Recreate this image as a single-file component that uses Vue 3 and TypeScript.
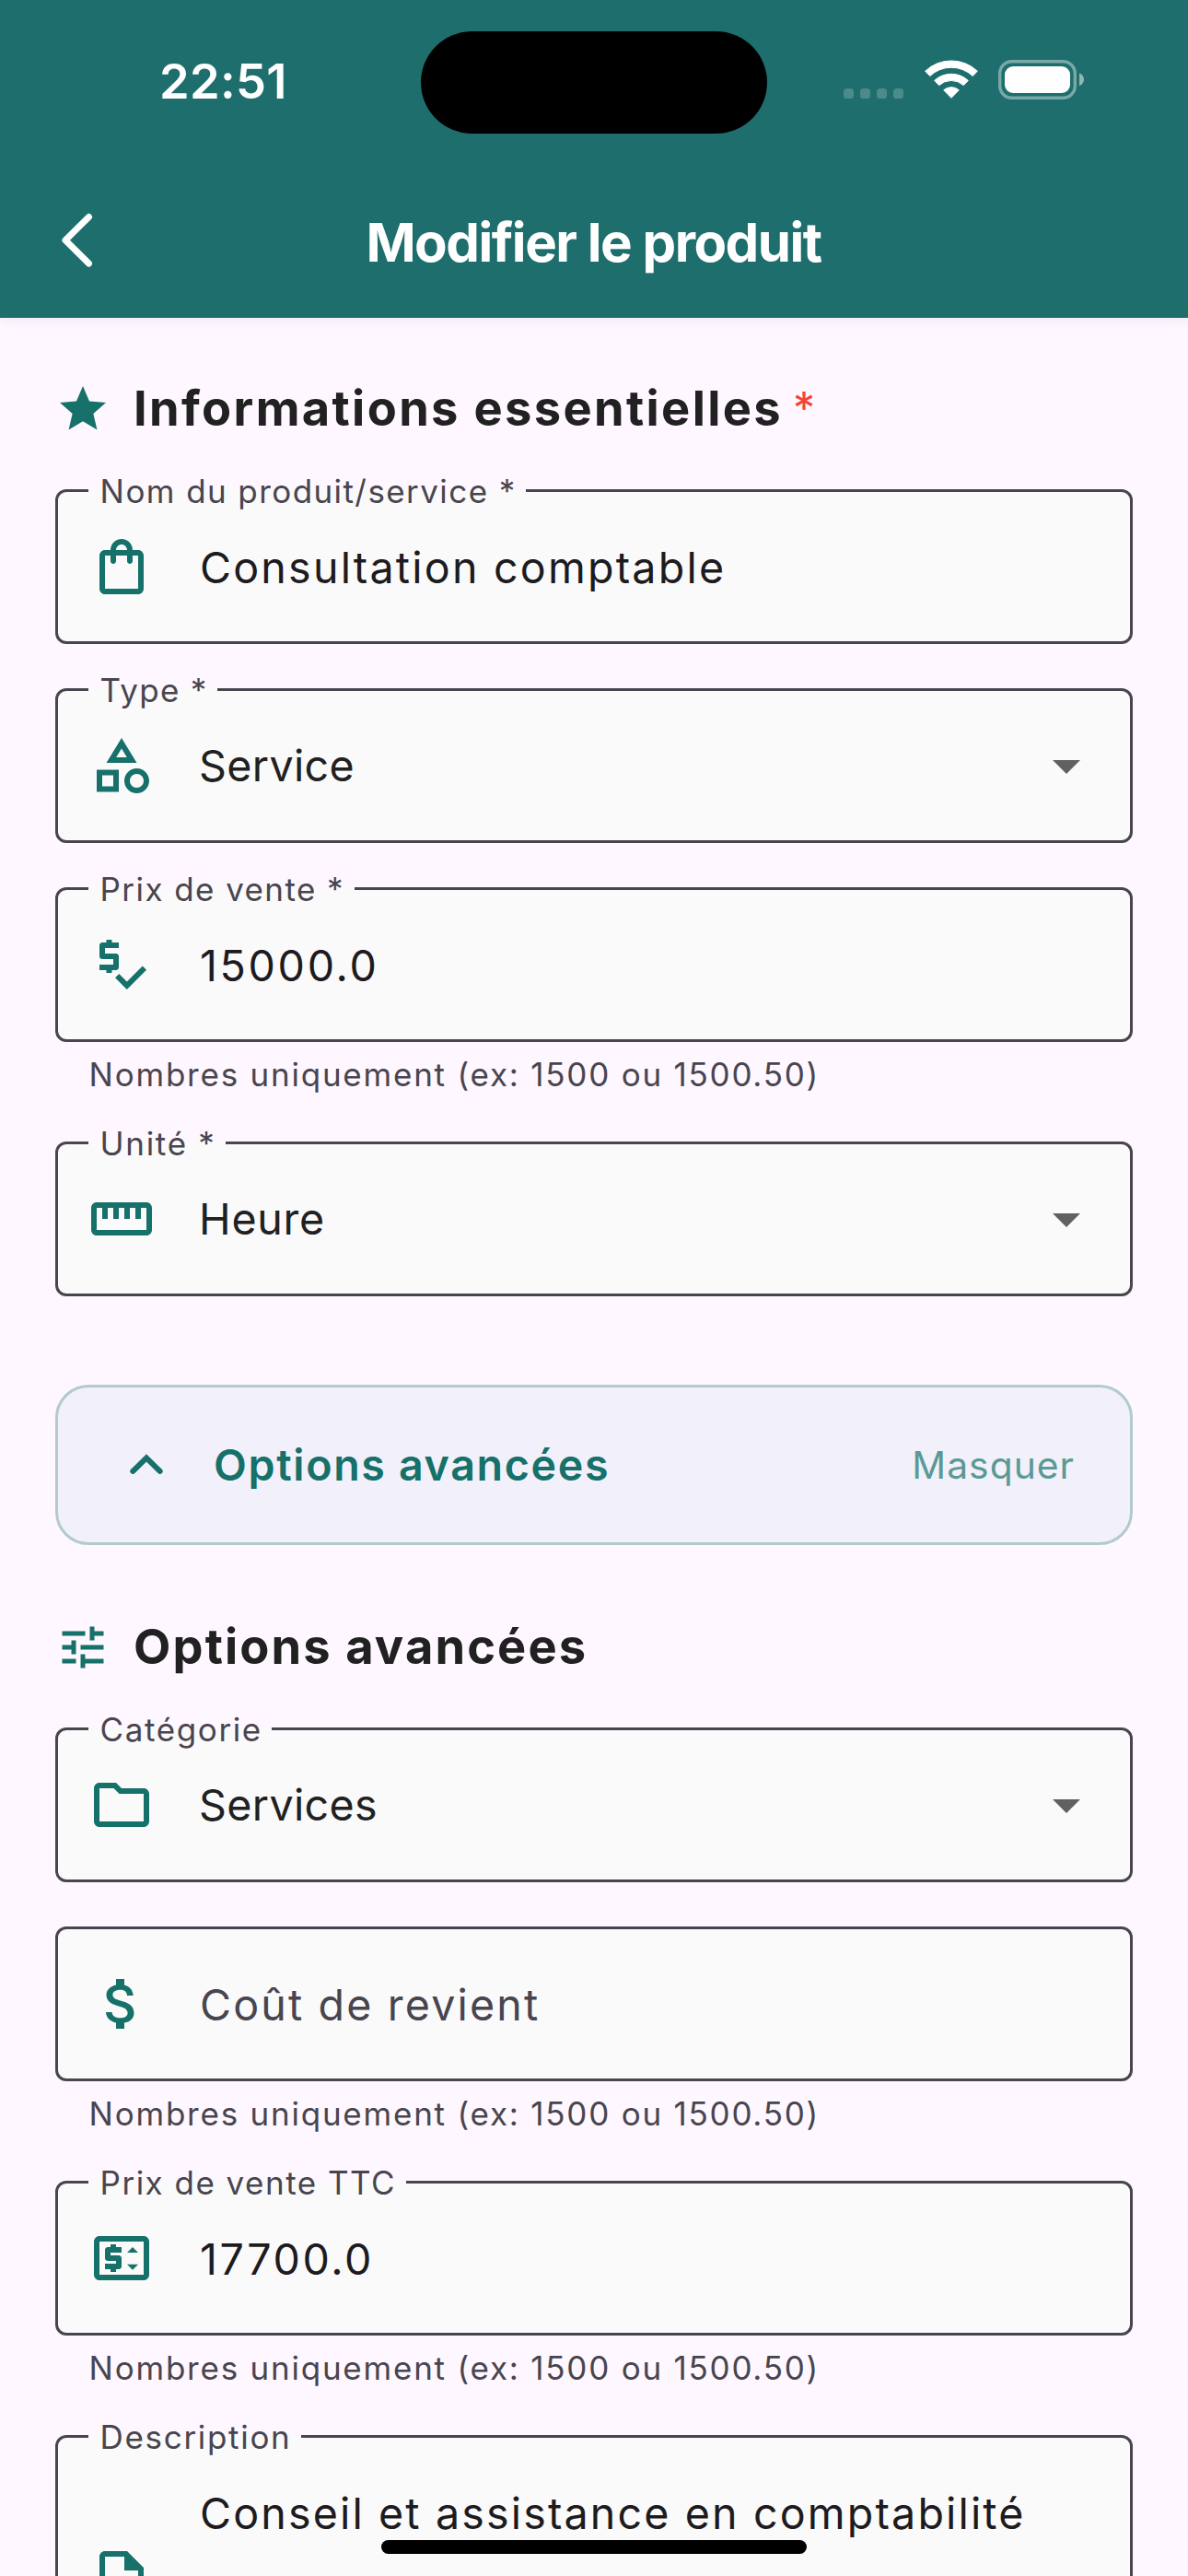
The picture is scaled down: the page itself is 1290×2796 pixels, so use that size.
<script setup lang="ts">
interface Field {
  label: string
  labelSpacing?: number
  value?: string
  spacing: number
  icon: string
  select?: boolean
  helper?: boolean
  multiline?: boolean
}

const icons = {
  bag: 'M18 6h-2c0-2.21-1.79-4-4-4S8 3.79 8 6H6c-1.1 0-2 .9-2 2v12c0 1.1.9 2 2 2h12c1.1 0 2-.9 2-2V8c0-1.1-.9-2-2-2zm-6-2c1.1 0 2 .9 2 2h-4c0-1.1.9-2 2-2zm6 16H6V8h2v2c0 .55.45 1 1 1s1-.45 1-1V8h4v2c0 .55.45 1 1 1s1-.45 1-1V8h2v12z',
  category:
    'M12 2l-5.5 9h11L12 2zm0 3.84L13.93 9h-3.87L12 5.84zM17.5 13c-2.49 0-4.5 2.01-4.5 4.5s2.01 4.5 4.5 4.5 4.5-2.01 4.5-4.5-2.01-4.5-4.5-4.5zm0 7c-1.38 0-2.5-1.12-2.5-2.5s1.12-2.5 2.5-2.5 2.5 1.12 2.5 2.5-1.12 2.5-2.5 2.5zM3 21.5h8v-8H3v8zm2-6h4v4H5v-4z',
  priceCheck:
    'M11 13V9c0-.55-.45-1-1-1H6V6h5V4H8.5V3h-2v1H5c-.55 0-1 .45-1 1v4c0 .55.45 1 1 1h4v2H4v2h2.5v1h2v-1H10c.55 0 1-.45 1-1zm8.59-.48l-5.66 5.66-2.83-2.83-1.41 1.41L13.93 21 21 13.93l-1.41-1.41z',
  ruler:
    'M21 6H3c-1.1 0-2 .9-2 2v8c0 1.1.9 2 2 2h18c1.1 0 2-.9 2-2V8c0-1.1-.9-2-2-2zm0 10H3V8h2v4h2V8h2v4h2V8h2v4h2V8h2v4h2V8h2v8z',
  folder:
    'M9.17 6l2 2H20v10H4V6h5.17M10 4H4c-1.1 0-1.99.9-1.99 2L2 18c0 1.1.9 2 2 2h16c1.1 0 2-.9 2-2V8c0-1.1-.9-2-2-2h-8l-2-2z',
  dollar:
    'M11.8 10.9c-2.27-.59-3-1.2-3-2.15 0-1.09 1.01-1.85 2.7-1.85 1.78 0 2.44.85 2.5 2.1h2.21c-.07-1.72-1.12-3.3-3.21-3.81V3h-3v2.16c-1.94.42-3.5 1.68-3.5 3.61 0 2.31 1.91 3.46 4.7 4.13 2.5.6 3 1.48 3 2.41 0 .69-.49 1.79-2.7 1.79-2.06 0-2.87-.92-2.98-2.1h-2.2c.12 2.19 1.76 3.42 3.68 3.83V21h3v-2.15c1.95-.37 3.5-1.5 3.5-3.55 0-2.84-2.43-3.81-4.7-4.4z',
  priceChange:
    'M20 4H4c-1.11 0-1.99.89-1.99 2L2 18c0 1.11.89 2 2 2h16c1.11 0 2-.89 2-2V6c0-1.11-.89-2-2-2zm0 14H4V6h16v12zM8 17h2v-1h1c.55 0 1-.45 1-1v-3c0-.55-.45-1-1-1H8v-1h4V8h-2V7H8v1H7c-.55 0-1 .45-1 1v3c0 .55.45 1 1 1h3v1H6v2h2v1zM14 10h4l-2-2-2 2zM14 14.25h4l-2 2-2-2z',
  document:
    'M8 16h8v2H8zm0-4h8v2H8zm6-10H6c-1.1 0-2 .9-2 2v16c0 1.1.89 2 1.99 2H18c1.1 0 2-.9 2-2V8l-6-6zm4 18H6V4h7v5h5v11z',
  star: 'M12 17.27L18.18 21l-1.64-7.03L22 9.24l-7.19-.61L12 2 9.19 8.63 2 9.24l5.46 4.73L5.82 21z',
  tune: 'M3 17v2h6v-2H3zM3 5v2h10V5H3zm10 16v-2h8v-2h-8v-2h-2v6h2zM7 9v2H3v2h4v2h2V9H7zm14 4v-2H11v2h10zm-6-4h2V7h4V5h-4V3h-2v6z',
}

const essentials: Field[] = [
  { label: 'Nom du produit/service *', labelSpacing: 1.42, value: 'Consultation comptable', spacing: 2.2, icon: icons.bag },
  { label: 'Type *', labelSpacing: 1.3, value: 'Service', spacing: 0.35, icon: icons.category, select: true },
  { label: 'Prix de vente *', labelSpacing: 1.42, value: '15000.0', spacing: 2.65, icon: icons.priceCheck, helper: true },
  { label: 'Unité *', labelSpacing: 1.69, value: 'Heure', spacing: 0.75, icon: icons.ruler, select: true },
]

const advanced: Field[] = [
  { label: 'Catégorie', labelSpacing: 1.6, value: 'Services', spacing: 0.35, icon: icons.folder, select: true },
  { label: 'Coût de revient', spacing: 2.15, icon: icons.dollar, helper: true },
  { label: 'Prix de vente TTC', labelSpacing: 1.48, value: '17700.0', spacing: 2.55, icon: icons.priceChange, helper: true },
  { label: 'Description', labelSpacing: 1.68, value: 'Conseil et assistance en comptabilité', spacing: 2.14, icon: icons.document, multiline: true },
]

const sections = [
  { title: 'Informations essentielles', spacing: 2.35, icon: icons.star, required: true, fields: essentials },
  { title: 'Options avancées', spacing: 2.12, icon: icons.tune, required: false, fields: advanced },
]
</script>

<template>
  <div class="screen">
    <header class="header">
      <div class="status">
        <div class="time">22:51</div>
        <div class="island"></div>
        <div class="indicators">
          <svg class="dots" width="65" height="11" viewBox="0 0 65 11" fill="#fff" fill-opacity="0.2">
            <rect v-for="i in 4" :key="i" :x="(i - 1) * 18" y="0" width="11" height="11" rx="3.6" />
          </svg>
          <svg class="wifi" width="58" height="43" viewBox="0 0 58 43" fill="#fff" stroke="#fff" stroke-width="1" stroke-linejoin="round">
            <path d="M.7 12.2A41.2 41.2 0 0 1 57.3 12.2L52.2 17.5A33.7 33.7 0 0 0 5.8 17.5Z" />
            <path d="M10.7 22.4A27 27 0 0 1 47.3 22.4L42.3 27.6A19.8 19.8 0 0 0 15.7 27.6Z" />
            <path d="M20.7 32.8A12.5 12.5 0 0 1 37.3 32.8L29 41.3Z" />
          </svg>
          <svg class="battery" width="94" height="43" viewBox="0 0 94 43">
            <rect x="1.7" y="1.7" width="81.6" height="39.6" rx="13" fill="none" stroke="#fff" stroke-opacity="0.4" stroke-width="3.4" />
            <rect x="7" y="7" width="71" height="29" rx="9" fill="#fff" />
            <path d="M88 14.5C91 15.5 93 18 93 21.3S91 27.2 88 28.2Z" fill="#fff" fill-opacity="0.5" />
          </svg>
        </div>
      </div>
      <div class="toolbar">
        <svg class="back" width="42" height="60" viewBox="0 0 42 60" fill="none" stroke="#fff" stroke-width="7" stroke-linecap="round" stroke-linejoin="round">
          <path d="M32.5 4.5 L7 29.7 L32.5 55" />
        </svg>
        <h1>Modifier le produit</h1>
      </div>
    </header>

    <main class="content">
      <template v-for="(section, index) in sections" :key="section.title">
        <button v-if="index === 1" class="toggle">
          <svg class="chevron" width="72" height="72" viewBox="0 0 24 24">
            <path d="M7.1 14.3L12 9.45l4.9 4.85" fill="none" stroke="currentColor" stroke-width="2" stroke-linecap="round" stroke-linejoin="miter" />
          </svg>
          <span class="toggle-title">Options avancées</span>
          <span class="toggle-action">Masquer</span>
        </button>
        <section class="section">
          <h2 class="section-title">
            <svg width="60" height="60" viewBox="0 0 24 24"><path :d="section.icon" fill="currentColor" /></svg>
            <span :style="{ letterSpacing: section.spacing + 'px' }">{{ section.title }}</span>
            <span v-if="section.required" class="required">*</span>
          </h2>
          <div v-for="field in section.fields" :key="field.label" class="group">
            <div class="field" :class="{ multiline: field.multiline }">
              <span v-if="field.value" class="label" :style="{ letterSpacing: field.labelSpacing + 'px' }">{{ field.label }}</span>
              <svg class="prefix" width="72" height="72" viewBox="0 0 24 24"><path :d="field.icon" fill="currentColor" /></svg>
              <span class="value" :class="{ placeholder: !field.value, selected: field.select }" :style="{ letterSpacing: field.spacing + 'px' }">{{ field.value ?? field.label }}</span>
              <svg v-if="field.select" class="arrow" width="72" height="72" viewBox="0 0 24 24"><path d="M7 10l5 5 5-5z" fill="currentColor" /></svg>
            </div>
            <p v-if="field.helper" class="helper">Nombres uniquement (ex: 1500 ou 1500.50)</p>
          </div>
        </section>
      </template>
    </main>
    <div class="home-indicator"></div>
  </div>
</template>

<style>
body {
  margin: 0;
  background: #fef7ff;
}
</style>

<style scoped>
.screen {
  position: relative;
  width: 1290px;
  height: 2796px;
  overflow: hidden;
  background: #fef7ff;
  font-family: Inter, "Liberation Sans", sans-serif;
  font-weight: 400;
  color: #212121;
}
.header {
  height: 345px;
  background: #1e6e6d;
  color: #fff;
  box-shadow: 0 2px 14px rgba(60, 30, 70, 0.07);
}
.status {
  display: flex;
  height: 177px;
}
.time {
  box-sizing: border-box;
  width: 457px;
  padding: 56px 0 0 173px;
  font-size: 52.4px;
  line-height: 64px;
  font-weight: 600;
  letter-spacing: 0.3px;
}
.island {
  width: 376px;
  height: 111px;
  margin-top: 33.5px;
  border-radius: 56px;
  background: #000;
}
.indicators {
  display: flex;
  align-items: flex-end;
  height: 108px;
  margin-left: 83px;
}
.dots {
  margin-bottom: 1px;
}
.wifi {
  margin-left: 23px;
}
.battery {
  margin-left: 22px;
}
.toolbar {
  display: flex;
  align-items: center;
  height: 168px;
  padding: 0 64px;
}
h1 {
  flex: 1;
  margin: 0;
  padding: 3px 43px 0 0;
  font-size: 58.2px;
  line-height: 72px;
  font-weight: 700;
  letter-spacing: -1.5px;
  text-align: center;
}
.content {
  display: flex;
  flex-direction: column;
  padding: 60px 60px 0;
}
.section {
  display: flex;
  flex-direction: column;
  gap: 48px;
}
.section-title {
  display: flex;
  align-items: center;
  height: 78px;
  margin: 0;
  font-size: 52.4px;
  font-weight: 700;
}
.section-title svg {
  color: #15716a;
  margin-right: 25px;
}
.section-title span {
  line-height: 78px;
  margin-top: -2px;
}
.section-title .required {
  margin-left: 11px;
  color: #f44336;
  font-weight: 400;
  font-size: 48px;
}
.field {
  position: relative;
  box-sizing: border-box;
  display: flex;
  align-items: center;
  height: 168px;
  padding: 0 33px;
  border: 3px solid #49454f;
  border-radius: 12px;
  background: #fafafa;
}
.label {
  position: absolute;
  left: 33px;
  top: -23px;
  padding: 0 10.5px 0 12.6px;
  font-size: 35px;
  line-height: 44px;
  color: #49454f;
  white-space: nowrap;
  background: linear-gradient(#fafafa, #fafafa) 0 20px / 100% 3px no-repeat;
}
.prefix {
  flex: none;
  color: #15716a;
}
.value {
  flex: 1;
  margin-left: 49px;
  padding-top: 2px;
  font-size: 46.6px;
  line-height: 72px;
  color: #1d1b20;
  white-space: nowrap;
}
.value.selected {
  padding-top: 0;
  margin-left: 48px;
  color: #212121;
}
.value.placeholder {
  color: #49454f;
}
.arrow {
  flex: none;
  color: #616161;
}
.multiline {
  height: 312px;
}
.multiline .value {
  align-self: flex-start;
  padding-top: 46px;
}
.helper {
  box-sizing: border-box;
  height: 60px;
  margin: 0;
  padding: 11px 36.6px 0;
  font-size: 35px;
  line-height: 48px;
  letter-spacing: 1.77px;
  color: #49454f;
  white-space: nowrap;
}
.toggle {
  box-sizing: border-box;
  display: flex;
  align-items: center;
  height: 174px;
  margin: 96px 0 72px;
  padding: 0 60px;
  border: 3px solid #b1cbcd;
  border-radius: 36px;
  background: #f2f0fa;
  color: #15716a;
  font-family: inherit;
  font-weight: inherit;
  text-align: left;
}
.toggle-title {
  flex: 1;
  margin-left: 37px;
  font-size: 46.6px;
  font-weight: 600;
  letter-spacing: 1.65px;
}
.toggle-action {
  font-size: 40.8px;
  letter-spacing: 1.02px;
  color: #5a9a95;
}
.home-indicator {
  position: absolute;
  left: 414px;
  top: 2757px;
  width: 462px;
  height: 15px;
  border-radius: 8px;
  background: #000;
}
</style>
